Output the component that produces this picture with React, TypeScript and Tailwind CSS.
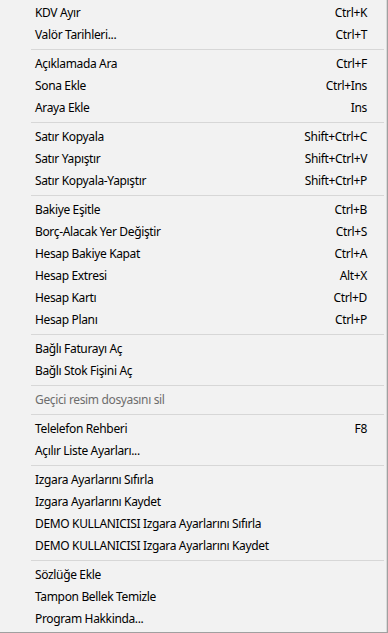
import React from "react";

type Item = { label: string; shortcut?: string; disabled?: boolean } | "sep";

const items: Item[] = [
  { label: "KDV Ayır", shortcut: "Ctrl+K" },
  { label: "Valör Tarihleri...", shortcut: "Ctrl+T" },
  "sep",
  { label: "Açıklamada Ara", shortcut: "Ctrl+F" },
  { label: "Sona Ekle", shortcut: "Ctrl+Ins" },
  { label: "Araya Ekle", shortcut: "Ins" },
  "sep",
  { label: "Satır Kopyala", shortcut: "Shift+Ctrl+C" },
  { label: "Satır Yapıştır", shortcut: "Shift+Ctrl+V" },
  { label: "Satır Kopyala-Yapıştır", shortcut: "Shift+Ctrl+P" },
  "sep",
  { label: "Bakiye Eşitle", shortcut: "Ctrl+B" },
  { label: "Borç-Alacak Yer Değiştir", shortcut: "Ctrl+S" },
  { label: "Hesap Bakiye Kapat", shortcut: "Ctrl+A" },
  { label: "Hesap Extresi", shortcut: "Alt+X" },
  { label: "Hesap Kartı", shortcut: "Ctrl+D" },
  { label: "Hesap Planı", shortcut: "Ctrl+P" },
  "sep",
  { label: "Bağlı Faturayı Aç" },
  { label: "Bağlı Stok Fişini Aç" },
  "sep",
  { label: "Geçici resim dosyasını sil", disabled: true },
  "sep",
  { label: "Telelefon Rehberi", shortcut: "F8" },
  { label: "Açılır Liste Ayarları..." },
  "sep",
  { label: "Izgara Ayarlarını Sıfırla" },
  { label: "Izgara Ayarlarını Kaydet" },
  { label: "DEMO KULLANICISI Izgara Ayarlarını Sıfırla" },
  { label: "DEMO KULLANICISI Izgara Ayarlarını Kaydet" },
  "sep",
  { label: "Sözlüğe Ekle" },
  { label: "Tampon Bellek Temizle" },
  { label: "Program Hakkinda..." },
];

export default function App() {
  return (
    <div
      className="w-[388px] h-[633px] bg-[#f2f2f2] border-r border-b border-[#a0a0a0] text-[12px] tracking-[-0.35px] text-black"
      style={{ fontFamily: '"Noto Sans", "Open Sans", sans-serif' }}
    >
      <div className="h-full border-r border-[#dadada] pt-[2px]">
        {items.map((it, i) =>
          it === "sep" ? (
            <div key={i} className="h-[7px] flex items-center pl-[31px] pr-[2px]">
              <div className="h-px w-full bg-[#d7d7d7]" />
            </div>
          ) : (
            <div
              key={i}
              className={`h-[22px] flex items-center justify-between pl-[35px] pr-[19px] ${
                it.disabled ? "text-[#6d6d6d]" : ""
              }`}
            >
              <span>{it.label}</span>
              {it.shortcut && <span>{it.shortcut}</span>}
            </div>
          )
        )}
      </div>
    </div>
  );
}
